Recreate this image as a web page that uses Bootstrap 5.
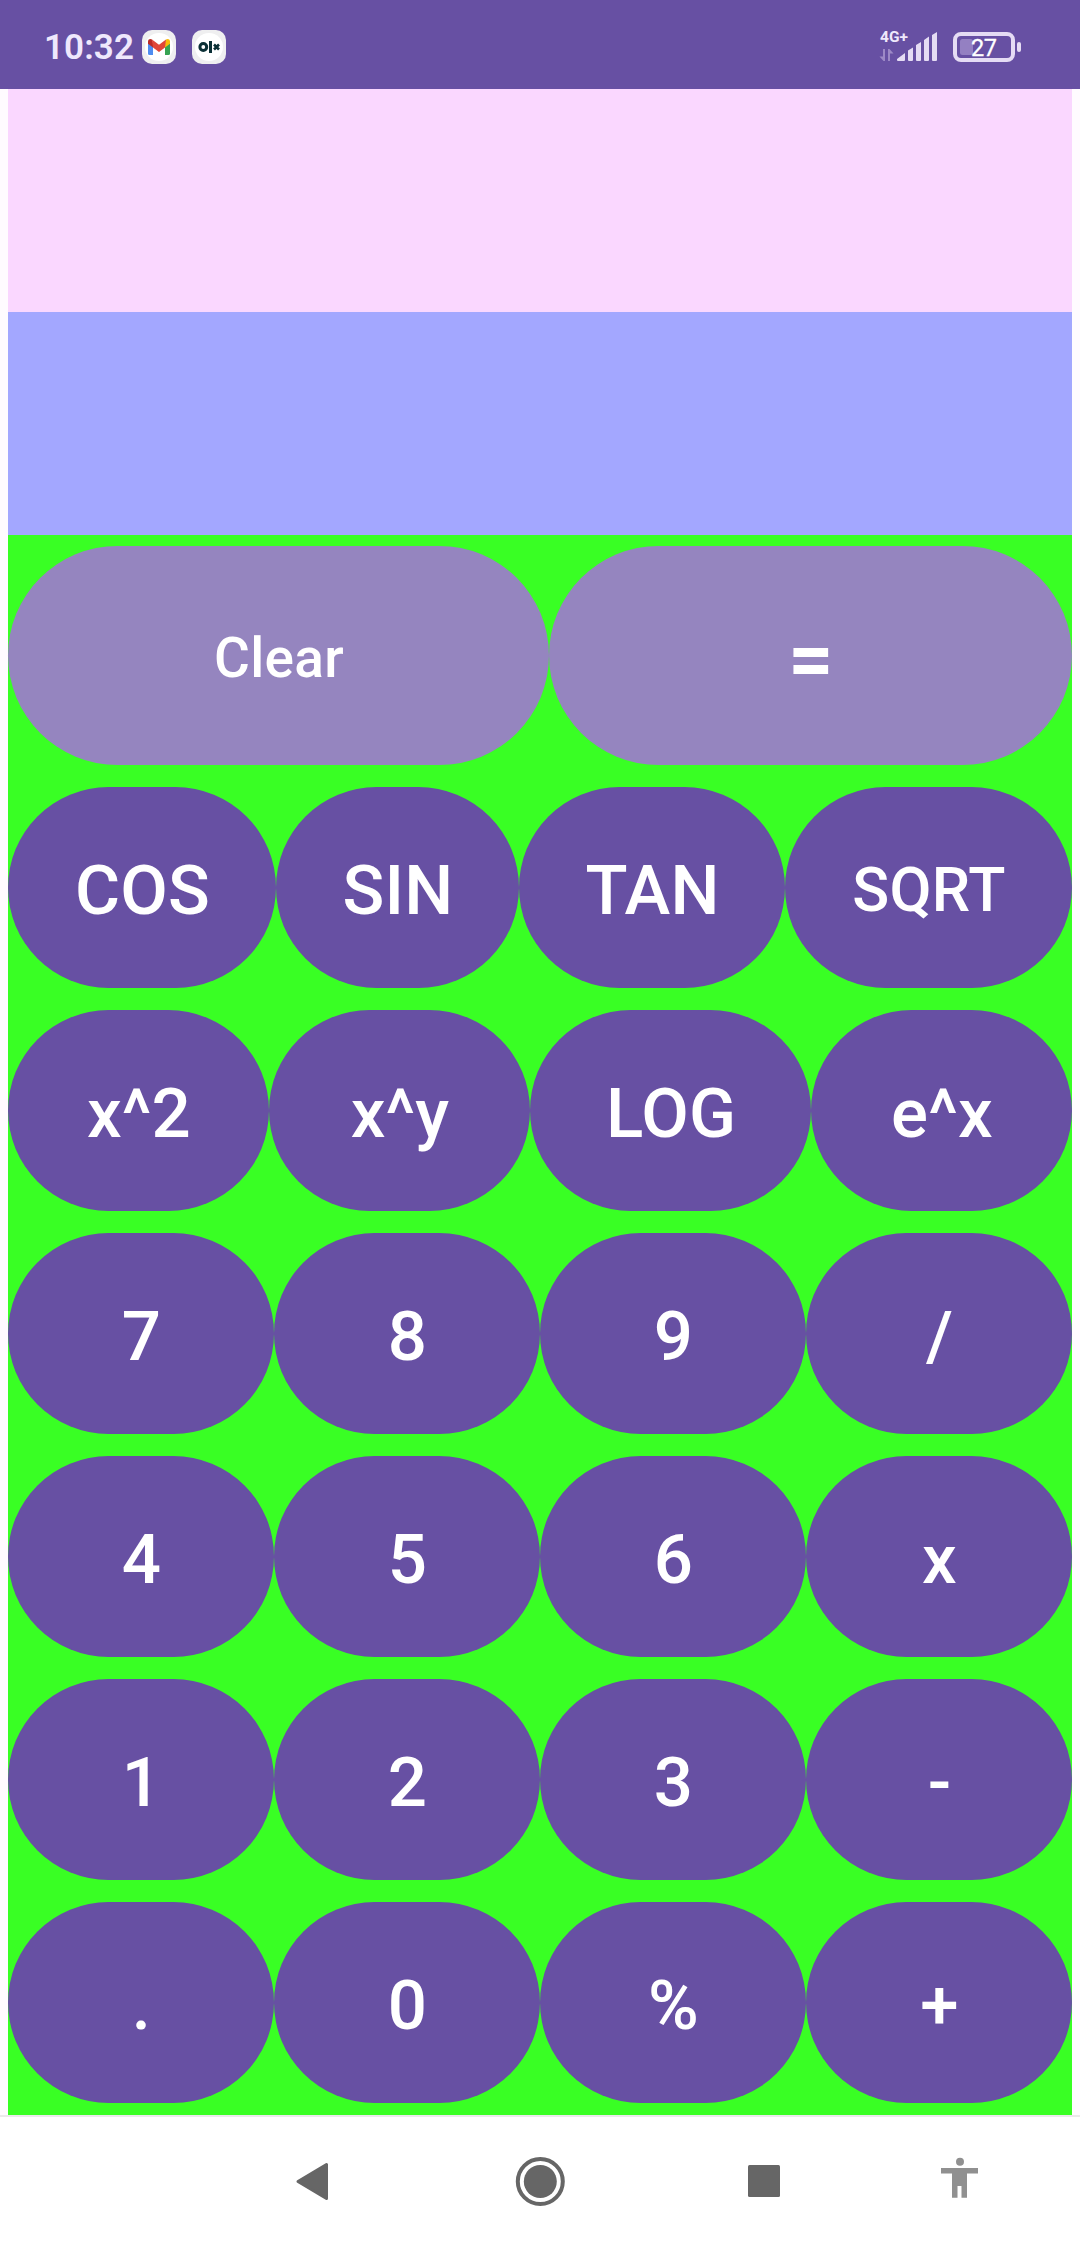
<!DOCTYPE html>
<html lang="en">
<head>
<meta charset="utf-8">
<meta name="viewport" content="width=device-width, initial-scale=1">
<title>Calculator</title>
<link href="https://cdn.jsdelivr.net/npm/bootstrap@5.3.0/dist/css/bootstrap.min.css" rel="stylesheet">
<style>
  body { font-family: Roboto, "Noto Sans", sans-serif; background: #fffbff; height: 2246px; overflow: hidden; }
  .status-bar { height: 89px; background: #6750a3; color: #efe8fc; padding: 5px 59px 0 44px; flex: none; }
  .clock { font-size: 35px; font-weight: 600; line-height: 40px; width: 98px; letter-spacing: .1px; padding-top: 2px; }
  .status-bar svg { display: block; }
  .screen-area { padding: 0 8px; flex: none; }
  .display-top { height: 223px; background: #fad7ff; }
  .display-bottom { height: 223px; background: #a3a7ff; }
  .keypad { background: #39ff24; height: 1580px; }
  .key-row { display: grid; grid-template-columns: repeat(4, 266px); padding: 11px 0; height: 223px; }
  .key-row.row-main { grid-template-columns: 541px 523px; height: 241px; }
  .key-row.row-trig { grid-template-columns: 268px 243px 266px 287px; }
  .key-row.row-pow { grid-template-columns: 261px 261px 281px 261px; }
  .key { --bs-btn-color: #fff; --bs-btn-bg: #6750a3; --bs-btn-hover-color: #fff; --bs-btn-hover-bg: #5b4594;
         --bs-btn-border-width: 0; --bs-btn-padding-x: 0; --bs-btn-padding-y: 0;
         --bs-btn-font-size: 69px; --bs-btn-font-weight: 500; --bs-btn-line-height: 1; padding-top: 6px; padding-left: 1px; letter-spacing: .2px; }
  .key-light { --bs-btn-bg: #9585bf; }
  .key-clear { --bs-btn-font-size: 55px; letter-spacing: .3px; }
  .key-equals { --bs-btn-font-size: 79px; --bs-btn-font-weight: 700; padding-top: 7px; }
  .key-sqrt { --bs-btn-font-size: 61px; }
  .nav-keys { height: 131px; background: #fff; border-top: 2px solid #ebe9eb; flex: none; }
</style>
</head>
<body class="d-flex flex-column m-0">
<header class="status-bar d-flex align-items-center justify-content-between">
  <div class="d-flex align-items-center">
    <span class="clock">10:32</span>
    <svg width="34" height="34" viewBox="0 0 34 34">
      <rect width="34" height="34" rx="10" fill="#efeff0"/><circle cx="17" cy="17" r="14" fill="#fff"/>
      <path d="M6 11v12.5q0 1.5 1.5 1.5H11V14z" fill="#4f8df0"/>
      <path d="M23 14v11h3.500q1.500 0 1.500-1.500V11z" fill="#37a353"/>
      <path d="M23 12.500v5l5-3.800V11.500c0-2.600-2.600-3.100-4-2z" fill="#f8bb0a"/>
      <path d="M11 12.500v5l-5-3.800V11.500c0-2.600 2.600-3.100 4-2z" fill="#bd2a25"/>
      <path d="M10 9.500l7 5.300 7-5.300-1 8-6 4.500-6-4.500z" fill="#e04638"/>
    </svg>
    <svg class="ms-3" width="34" height="34" viewBox="0 0 34 34">
      <rect width="34" height="34" rx="10" fill="#efeff0"/><circle cx="17" cy="17" r="14" fill="#fff"/>
      <circle cx="11.300" cy="17" r="3.400" fill="none" stroke="#0b3036" stroke-width="3"/>
      <path d="M17 11h3v12h-3z" fill="#0b3036"/>
      <path d="M22 14.500l5 5M27 14.500l-5 5" stroke="#0b3036" stroke-width="2.600"/>
    </svg>
  </div>
  <svg width="142" height="44" viewBox="879 25 142 44" fill="#e5dcf4">
    <text x="880" y="42" font-size="15.500" font-weight="700" fill="#efe8fc">4G+</text>
    <path d="M883 49h2v12h-1.500l-4-4.500h3.500zM888 61V49h1.500l4 4.500H890V61z" fill="#9d89c6"/>
    <path d="M897 59l8-6v7q0 1-1 1h-6q-1 0-1-1zM908 50.500l5-3V60q0 1-1 1h-3q-1 0-1-1zM916 45l5-3V60q0 1-1 1h-3q-1 0-1-1zM924 40l5-3.500V60q0 1-1 1h-3q-1 0-1-1zM932 35l5-3V60q0 1-1 1h-3q-1 0-1-1z"/>
    <rect x="955" y="34" width="58" height="26" rx="6" fill="none" stroke="#e5dcf4" stroke-width="4"/>
    <rect x="960" y="39" width="13" height="16" rx="2.500" fill="#9480c2"/>
    <rect x="1017" y="42" width="4" height="10" rx="2"/>
    <text x="971" y="56" font-size="23.500" fill="#fff" stroke="#fff" stroke-width=".3" letter-spacing="-.4">27</text>
  </svg>
</header>

<main class="screen-area">
  <div class="display-top"></div>
  <div class="display-bottom"></div>
  <div class="keypad">
    <div class="key-row row-main">
      <button type="button" class="btn key key-light key-clear rounded-pill">Clear</button>
      <button type="button" class="btn key key-light key-equals rounded-pill">=</button>
    </div>
    <div class="key-row row-trig">
      <button type="button" class="btn key rounded-pill">COS</button>
      <button type="button" class="btn key rounded-pill">SIN</button>
      <button type="button" class="btn key rounded-pill">TAN</button>
      <button type="button" class="btn key key-sqrt rounded-pill">SQRT</button>
    </div>
    <div class="key-row row-pow">
      <button type="button" class="btn key rounded-pill">x^2</button>
      <button type="button" class="btn key rounded-pill">x^y</button>
      <button type="button" class="btn key rounded-pill">LOG</button>
      <button type="button" class="btn key rounded-pill">e^x</button>
    </div>
    <div class="key-row">
      <button type="button" class="btn key rounded-pill">7</button>
      <button type="button" class="btn key rounded-pill">8</button>
      <button type="button" class="btn key rounded-pill">9</button>
      <button type="button" class="btn key rounded-pill">/</button>
    </div>
    <div class="key-row">
      <button type="button" class="btn key rounded-pill">4</button>
      <button type="button" class="btn key rounded-pill">5</button>
      <button type="button" class="btn key rounded-pill">6</button>
      <button type="button" class="btn key rounded-pill">x</button>
    </div>
    <div class="key-row">
      <button type="button" class="btn key rounded-pill">1</button>
      <button type="button" class="btn key rounded-pill">2</button>
      <button type="button" class="btn key rounded-pill">3</button>
      <button type="button" class="btn key rounded-pill">-</button>
    </div>
    <div class="key-row">
      <button type="button" class="btn key rounded-pill">.</button>
      <button type="button" class="btn key rounded-pill">0</button>
      <button type="button" class="btn key rounded-pill">%</button>
      <button type="button" class="btn key rounded-pill">+</button>
    </div>
  </div>
</main>

<nav class="nav-keys">
  <svg class="d-block" width="1080" height="129" viewBox="0 2117 1080 129" fill="#666">
    <path d="M326.500 2164.500v34L298 2181.500z" stroke="#666" stroke-width="3" stroke-linejoin="round"/>
    <circle cx="540.300" cy="2181.500" r="22.500" fill="none" stroke="#666" stroke-width="4"/>
    <circle cx="540.300" cy="2181.500" r="16.500"/>
    <rect x="748" y="2165" width="32" height="32" rx="1.500"/>
    <g fill="#909090"><circle cx="960" cy="2161.800" r="4"/>
    <path d="M941 2168h37v5.500h-11v24.300h-5.500V2186h-4v11.800H952V2173.500h-11z"/></g>
  </svg>
</nav>
<script src="https://cdn.jsdelivr.net/npm/bootstrap@5.3.0/dist/js/bootstrap.bundle.min.js"></script>
</body>
</html>
